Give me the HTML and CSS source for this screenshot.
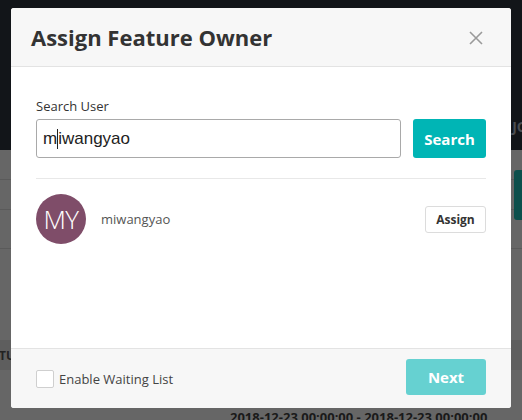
FILE: index.html
```html
<!DOCTYPE html>
<html>
<head>
<meta charset="utf-8">
<link rel="stylesheet" href="styles.css">
</head>
<body>
<div class="page">
  <div class="topbar"><span class="topbar-text">JO</span></div>
  <div class="row row-a"><span class="row-btn"></span></div>
  <div class="row row-b"></div>
  <div class="row row-c"></div>
  <div class="row row-gap"></div>
  <div class="row row-d"><span class="row-label">TU</span></div>
  <div class="row row-e"><span class="row-date">2018-12-23 00:00:00 - 2018-12-23 00:00:00</span></div>
</div>

<div class="modal">
  <div class="modal-header">
    <h1 class="modal-title">Assign Feature Owner</h1>
    <svg class="close" width="14" height="14" viewBox="0 0 14 14"><path d="M1 1L13 13M13 1L1 13" stroke="#9a9a9a" stroke-width="1.6" fill="none"/></svg>
  </div>
  <div class="modal-body">
    <label class="field-label">Search User</label>
    <div class="search-row">
      <div class="input">m<span class="caret"></span>iwangyao</div>
      <button class="btn btn-primary">Search</button>
    </div>
    <div class="divider"></div>
    <div class="user">
      <div class="avatar">MY</div>
      <div class="user-name">miwangyao</div>
      <button class="btn btn-default">Assign</button>
    </div>
  </div>
  <div class="modal-footer">
    <label class="check"><span class="box"></span>Enable Waiting List</label>
    <button class="btn btn-next">Next</button>
  </div>
</div>
</body>
</html>
```
FILE: styles.css
```css
* { box-sizing: border-box; }
html, body { margin: 0; padding: 0; }
body {
  width: 522px;
  height: 420px;
  overflow: hidden;
  background: #666666;
  font-family: "Open Sans", "Liberation Sans", sans-serif;
  position: relative;
}
.page { display: flex; flex-direction: column; }
.topbar {
  height: 150px;
  background: #121519;
  display: flex;
  align-items: flex-end;
  justify-content: flex-end;
  padding-bottom: 14px;
}
.topbar-text { color: #4a4d52; font-weight: 700; font-size: 14px; margin-right: -6px; }
.row { border-bottom: 1px solid #5a5a5a; position: relative; }
.row-a { height: 30px; display: flex; justify-content: flex-end; align-items: flex-start; padding-top: 20px; overflow: visible; }
.row-btn { width: 8px; height: 50px; background: #0c4f4c; border-radius: 3px 0 0 3px; position: relative; z-index: 1; }
.row-b { height: 30px; }
.row-c { height: 39px; }
.row-gap { height: 91px; border-bottom: none; }
.row-d { height: 30px; background: #5e5e5e; display: flex; align-items: center; border-bottom: none; }
.row-label { font-size: 12px; font-weight: 700; color: #222; margin-left: -1px; }
.row-e { height: 50px; border-bottom: none; }
.row-date { position: absolute; left: 230px; top: 38px; font-size: 13px; font-weight: 700; color: #1a1a1a; white-space: nowrap; }

.modal {
  position: absolute;
  left: 11px;
  top: 8px;
  width: 500px;
  height: 400px;
  background: #ffffff;
  border-radius: 3px;
  display: flex;
  flex-direction: column;
  overflow: hidden;
  z-index: 2;
}
.modal-header {
  height: 59px;
  background: #f7f7f7;
  border-bottom: 1px solid #e3e3e3;
  display: flex;
  align-items: center;
  justify-content: space-between;
  padding: 0 28px 0 20px;
}
.modal-title {
  margin: 0;
  font-size: 22px;
  font-weight: 700;
  color: #333333;
}
.close { display: block; margin-top: 1px; }
.modal-body {
  flex: 1;
  padding: 30px 25px 0 25px;
  display: flex;
  flex-direction: column;
}
.field-label { font-size: 13px; color: #333; line-height: 18px; display: block; }
.search-row { display: flex; gap: 12px; margin-top: 4px; }
.input {
  flex: 1;
  height: 39px;
  border: 1px solid #a9a9a9;
  border-radius: 3px;
  font-family: "Liberation Sans", Arial, sans-serif;
  font-size: 17px;
  color: #222;
  padding: 0 6px;
  display: flex;
  align-items: center;
}
.caret { display: inline-block; width: 1px; height: 20px; background: #222; }
.btn {
  font-family: "Open Sans", "Liberation Sans", sans-serif;
  font-weight: 700;
  border-radius: 3px;
  cursor: pointer;
}
.btn-primary {
  width: 73px;
  height: 39px;
  border: none;
  background: #00b5b5;
  color: #fff;
  font-size: 15px;
}
.divider { height: 1px; background: #e8e8e8; margin-top: 20px; }
.user { display: flex; align-items: center; margin-top: 15px; }
.avatar {
  width: 50px;
  height: 50px;
  border-radius: 50%;
  background: #7f4d69;
  color: #fff;
  font-size: 26px;
  font-weight: 300;
  display: flex;
  align-items: center;
  justify-content: center;
  letter-spacing: -0.5px;
}
.user-name { font-size: 13px; color: #555; margin-left: 15px; flex: 1; }
.btn-default {
  width: 61px;
  height: 27px;
  border: 1px solid #dcdcdc;
  background: #fff;
  color: #333;
  font-size: 12px;
  padding: 0;
}
.modal-footer {
  height: 60px;
  background: #f7f7f7;
  border-top: 1px solid #e3e3e3;
  display: flex;
  align-items: center;
  justify-content: space-between;
  padding: 0 25px;
}
.check { display: flex; align-items: center; font-size: 13px; color: #444; }
.box {
  width: 18px;
  height: 18px;
  border: 1px solid #cfcfcf;
  border-radius: 2px;
  background: #fff;
  margin-right: 5px;
}
.btn-next {
  width: 80px;
  height: 36px;
  border: none;
  background: #66d1d1;
  color: #fff;
  font-size: 15px;
  margin-top: -3px;
}
```
